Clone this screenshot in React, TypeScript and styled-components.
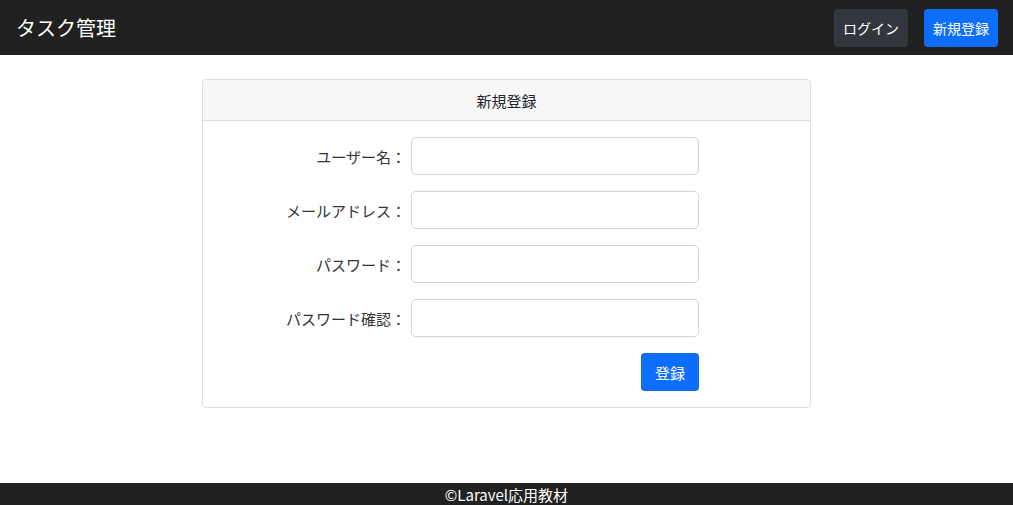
import styled, { createGlobalStyle } from 'styled-components';

const GlobalStyle = createGlobalStyle`
    html, body {
        margin: 0;
        padding: 0;
        background: #ffffff;
        font-family: "Noto Sans CJK JP", "Noto Sans", sans-serif;
        color: #212529;
    }
    * {
        box-sizing: border-box;
    }
`;

const Page = styled.div`
    width: 100vw;
    height: 100vh;
    display: flex;
    flex-direction: column;
`;

const NavBar = styled.header`
    height: 55px;
    background-color: #212121;
    display: flex;
    align-items: center;
    justify-content: space-between;
    padding: 0 15px 0 16px;
`;

const Brand = styled.div`
    color: #ffffff;
    font-size: 20px;
`;

const NavButtons = styled.div`
    display: flex;
    gap: 16px;
`;

const NavButton = styled.button<{ $primary?: boolean }>`
    height: 38px;
    padding: 0 9px;
    border: none;
    border-radius: 4px;
    font-family: inherit;
    font-size: 14px;
    color: #ffffff;
    background-color: ${(p) => (p.$primary ? '#0d6efd' : '#33373d')};
`;

const Main = styled.main`
    flex: 1;
    display: flex;
    justify-content: center;
    padding-top: 24px;
`;

const Card = styled.section`
    width: 609px;
    height: fit-content;
    border: 1px solid #dedede;
    border-radius: 4px;
    overflow: hidden;
`;

const CardHeader = styled.div`
    height: 41px;
    background-color: #f7f7f7;
    border-bottom: 1px solid #dedede;
    display: flex;
    align-items: center;
    justify-content: center;
    font-size: 15px;
`;

const CardBody = styled.form`
    padding: 16px 111px 16px 0;
    display: flex;
    flex-direction: column;
    gap: 16px;
`;

const Row = styled.div`
    display: flex;
    justify-content: flex-end;
    align-items: center;
    gap: 5px;
`;

const Label = styled.label`
    font-size: 15px;
    color: #333333;
`;

const Input = styled.input`
    width: 288px;
    height: 38px;
    border: 1px solid #ced4da;
    border-radius: 5px;
    font-family: inherit;
    font-size: 15px;
    padding: 0 10px;
`;

const Submit = styled.button`
    align-self: flex-end;
    width: 58px;
    height: 38px;
    border: none;
    border-radius: 4px;
    background-color: #0d6efd;
    color: #ffffff;
    font-family: inherit;
    font-size: 15px;
`;

const Footer = styled.footer`
    height: 22px;
    background-color: #212121;
    color: #ffffff;
    display: flex;
    align-items: center;
    justify-content: center;
    font-size: 15px;
`;

const fields = ['ユーザー名', 'メールアドレス', 'パスワード', 'パスワード確認'];

function App() {
    return (
        <Page>
            <GlobalStyle />
            <NavBar>
                <Brand>タスク管理</Brand>
                <NavButtons>
                    <NavButton>ログイン</NavButton>
                    <NavButton $primary>新規登録</NavButton>
                </NavButtons>
            </NavBar>
            <Main>
                <Card>
                    <CardHeader>新規登録</CardHeader>
                    <CardBody onSubmit={(e) => e.preventDefault()}>
                        {fields.map((f) => (
                            <Row key={f}>
                                <Label>{f}：</Label>
                                <Input type={f.startsWith('パスワード') ? 'password' : 'text'} />
                            </Row>
                        ))}
                        <Submit type="submit">登録</Submit>
                    </CardBody>
                </Card>
            </Main>
            <Footer>©Laravel応用教材</Footer>
        </Page>
    );
}

export default App;
